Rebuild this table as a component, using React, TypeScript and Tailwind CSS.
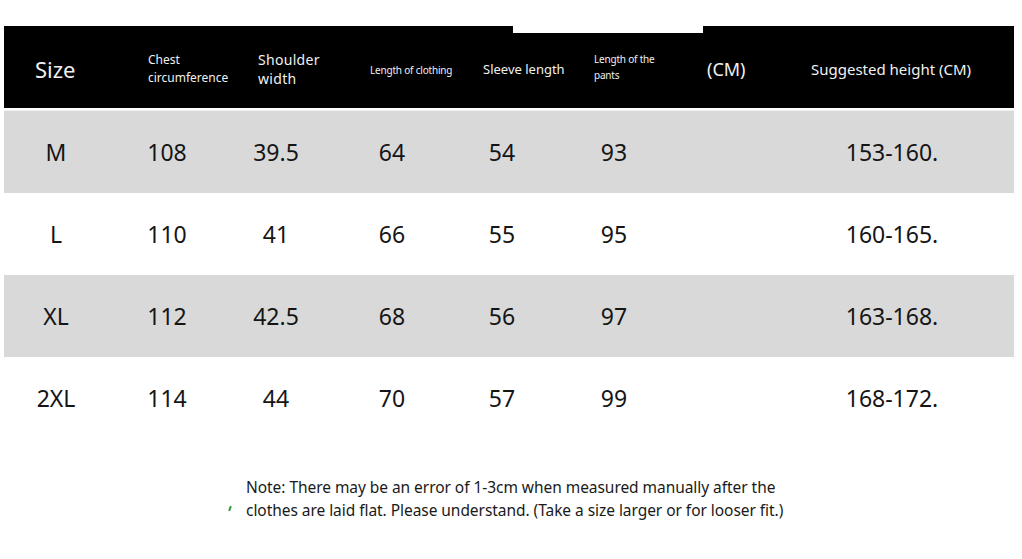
const cols = 'grid grid-cols-[106px_114px_104px_126px_96px_128px_92px_244px]';

const rows = [
  { size: 'M', chest: '108', shoulder: '39.5', length: '64', sleeve: '54', pants: '93', height: '153-160.', gray: true },
  { size: 'L', chest: '110', shoulder: '41', length: '66', sleeve: '55', pants: '95', height: '160-165.', gray: false },
  { size: 'XL', chest: '112', shoulder: '42.5', length: '68', sleeve: '56', pants: '97', height: '163-168.', gray: true },
  { size: '2XL', chest: '114', shoulder: '44', length: '70', sleeve: '57', pants: '99', height: '168-172.', gray: false },
];

export default function App() {
  return (
    <div
      className="w-[1022px] h-[559px] bg-white overflow-hidden pt-[26px] pl-[4px] pr-[8px]"
      style={{ fontFamily: '"Noto Sans", "Open Sans", sans-serif' }}
    >
      {/* header */}
      <div className={`${cols} relative h-[82px] bg-black text-[#f0f0f0] items-center whitespace-nowrap pt-[4px]`}>
        <div className="absolute top-0 left-[509px] w-[190px] h-[7px] bg-white" />
        <div className="pl-[31px] text-[22px]">Size</div>
        <div className="pl-[38px] text-[12px] leading-[18px]">
          Chest
          <br />
          circumference
        </div>
        <div className="pl-[34px] text-[14px] leading-[19px] tracking-[0.3px]">
          Shoulder
          <br />
          width
        </div>
        <div className="pl-[42px] text-[10px] tracking-[-0.2px] pt-[2px]">Length of clothing</div>
        <div className="pl-[29px] text-[13px] pt-[1px]">Sleeve length</div>
        <div className="pl-[44px] text-[10px] leading-[16px] tracking-[-0.2px] -mt-[4px]">
          Length of the
          <br />
          pants
        </div>
        <div className="pl-[29px] text-[18px]">(CM)</div>
        <div className="pl-[41px] text-[15px]">Suggested height (CM)</div>
      </div>

      {/* body */}
      <div className="mt-[2px] border-t border-[#efefef]">
        {rows.map((r) => (
          <div
            key={r.size}
            className={`${cols} h-[82px] items-center text-center text-[23px] text-[#151515] ${r.gray ? 'bg-[#d9d9d9]' : 'bg-white'}`}
          >
            <div className="pr-[2px]">{r.size}</div>
            <div>{r.chest}</div>
            <div>{r.shoulder}</div>
            <div className="pl-[2px]">{r.length}</div>
            <div>{r.sleeve}</div>
            <div>{r.pants}</div>
            <div />
            <div>{r.height}</div>
          </div>
        ))}
      </div>

      {/* note */}
      <div className="mt-[37px] flex">
        <div className="w-[224px] relative">
          <span className="absolute left-[225px] top-[30px] w-[2px] h-[5px] bg-[#2f9a3a] rotate-[20deg]" />
        </div>
        <p className="ml-[18px] text-[15.5px] leading-[23px] text-[#1a1a1a] tracking-[-0.05px]">
          Note: There may be an error of 1-3cm when measured manually after the
          <br />
          clothes are laid flat. Please understand. (Take a size larger or for looser fit.)
        </p>
      </div>
    </div>
  );
}
